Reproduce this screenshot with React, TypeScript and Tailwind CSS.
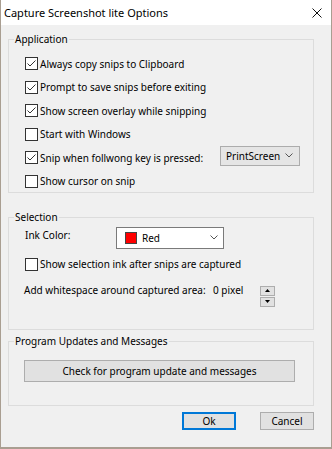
import React from "react";

function Check({ checked }: { checked?: boolean }) {
  return (
    <span className="w-[13px] h-[13px] shrink-0 bg-white border border-[#333] flex items-center justify-center">
      {checked && (
        <svg width="11" height="11" viewBox="0 0 11 11">
          <polyline points="1.5,5.5 4,8 9.5,2.5" fill="none" stroke="#333" strokeWidth="1" />
        </svg>
      )}
    </span>
  );
}

function Chevron() {
  return (
    <svg width="8" height="5" viewBox="0 0 8 5" className="shrink-0">
      <polyline points="0.5,0.5 4,4 7.5,0.5" fill="none" stroke="#555" strokeWidth="1" />
    </svg>
  );
}

function CheckRow({ label, checked, children }: { label: string; checked?: boolean; children?: React.ReactNode }) {
  return (
    <div className="h-[16px] flex items-center">
      <Check checked={checked} />
      <span className="ml-[2px] whitespace-nowrap">{label}</span>
      {children}
    </div>
  );
}

function Group({ title, className, children }: { title: string; className: string; children: React.ReactNode }) {
  return (
    <div className={"relative ml-[7px] w-[306px] border border-[#dcdcdc] " + className}>
      <span className="absolute -top-[9px] left-[5px] px-[1px] bg-[#f0f0f0] whitespace-nowrap">{title}</span>
      {children}
    </div>
  );
}

export default function App() {
  return (
    <div
      className="w-[332px] h-[449px] bg-[#f0f0f0] border-x border-b-2 border-[#a99e91] text-[10px] leading-[16px] text-black flex flex-col"
      style={{ fontFamily: '"Segoe UI", "Noto Sans", sans-serif' }}
    >
      {/* title bar */}
      <div className="h-[25px] shrink-0 bg-white flex items-center pl-[3px] pr-[9px]">
        <span className="text-[11px]">Capture Screenshot lite Options</span>
        <svg width="10" height="10" viewBox="0 0 10 10" className="ml-auto">
          <path d="M0.5 0.5 L9.5 9.5 M9.5 0.5 L0.5 9.5" stroke="#111" strokeWidth="1" />
        </svg>
      </div>

      {/* Application */}
      <Group title="Application" className="mt-[14px] pl-[16px] pr-[13px] pt-[15.5px] pb-[2.5px] flex flex-col gap-[7.6px]">
        <CheckRow label="Always copy snips to Clipboard" checked />
        <CheckRow label="Prompt to save snips before exiting" checked />
        <CheckRow label="Show screen overlay while snipping" checked />
        <CheckRow label="Start with Windows" />
        <CheckRow label="Snip when follwong key is pressed:" checked>
          <div className="ml-auto self-start -mt-[4px] w-[80px] h-[20px] shrink-0 bg-[#e5e5e5] border border-[#acacac] flex items-center pl-[5px] pr-[6px]">
            <span>PrintScreen</span>
            <span className="ml-auto">
              <Chevron />
            </span>
          </div>
        </CheckRow>
        <CheckRow label="Show cursor on snip" />
      </Group>

      {/* Selection */}
      <Group title="Selection" className="mt-[24px] pl-[16px] pr-[13px] pt-[9px] pb-[22px] flex flex-col">
        <div className="flex items-start">
          <span>Ink Color:</span>
          <div className="ml-auto mr-[76px] w-[108px] h-[22px] bg-white border border-[#7a7a7a] flex items-center pl-[8px] pr-[5px]">
            <span className="w-[12px] h-[12px] bg-[#ff0000] border border-[#444]" />
            <span className="ml-[5px]">Red</span>
            <span className="ml-auto">
              <Chevron />
            </span>
          </div>
        </div>
        <div className="mt-[7.5px]">
          <CheckRow label="Show selection ink after snips are captured" />
        </div>
        <div className="mt-[9.5px] flex items-start -ml-[1px]">
          <span className="whitespace-nowrap w-[189px]">Add whitespace around captured area:</span>
          <span className="whitespace-nowrap w-[47px]">0 pixel</span>
          <div className="mt-[4px] flex flex-col gap-[1px]">
            <div className="w-[15px] h-[10px] bg-[#e1e1e1] border border-[#adadad] flex items-center justify-center">
              <svg width="5" height="3" viewBox="0 0 5 3">
                <polygon points="0,3 2.5,0 5,3" fill="#000" />
              </svg>
            </div>
            <div className="w-[15px] h-[10px] bg-[#e1e1e1] border border-[#adadad] flex items-center justify-center">
              <svg width="5" height="3" viewBox="0 0 5 3">
                <polygon points="0,0 2.5,3 5,0" fill="#000" />
              </svg>
            </div>
          </div>
        </div>
      </Group>

      {/* Program Updates */}
      <Group title="Program Updates and Messages" className="mt-[11px] pl-[15px] pt-[18px] pb-[23px]">
        <button className="w-[271px] h-[22px] bg-[#e1e1e1] border border-[#adadad] flex items-center justify-center">
          Check for program update and messages
        </button>
      </Group>

      <div className="mt-[6px] w-[306px] ml-[7px] flex justify-end gap-[24px]">
        <button className="w-[54px] h-[18px] bg-[#e1e1e1] border-2 border-[#0078d7] flex items-center justify-center">
          Ok
        </button>
        <button className="w-[54px] h-[18px] bg-[#e1e1e1] border border-[#adadad] flex items-center justify-center">
          Cancel
        </button>
      </div>
    </div>
  );
}
